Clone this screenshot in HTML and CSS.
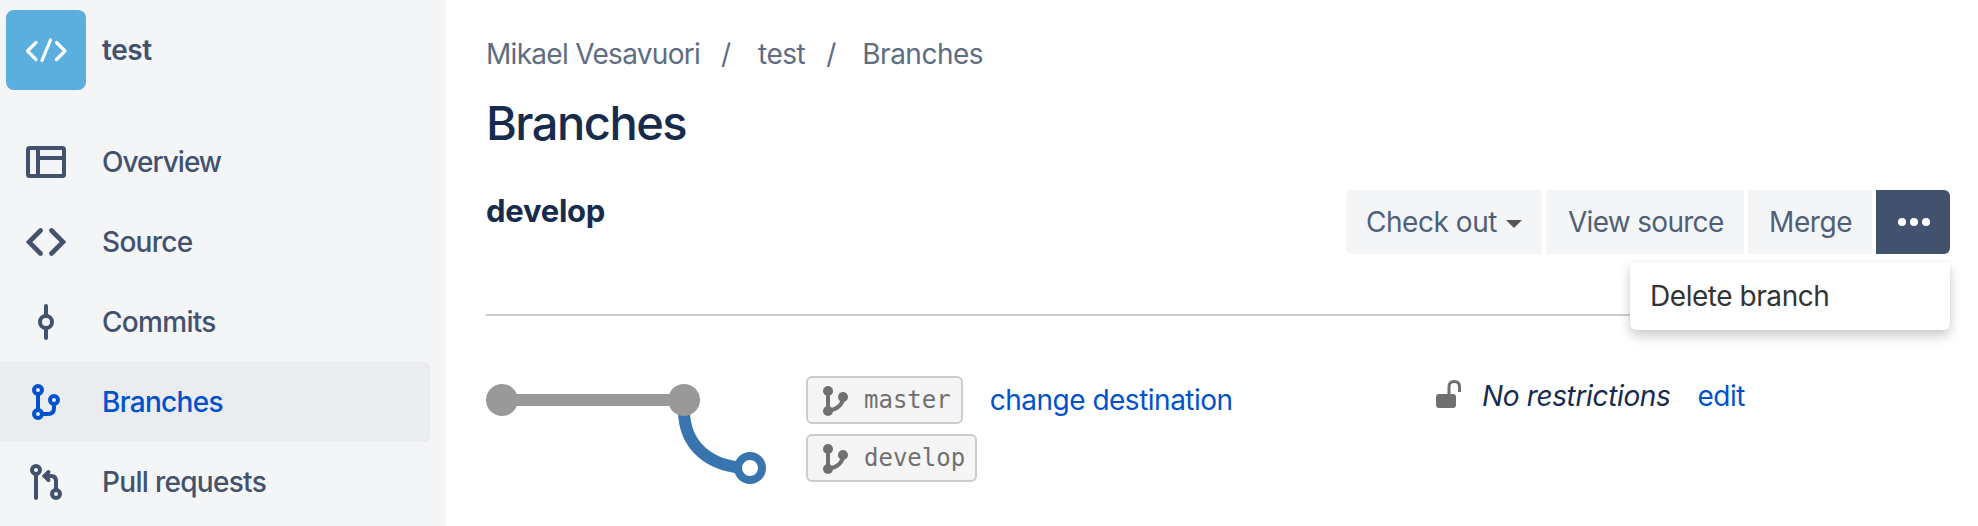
FILE: index.html
```
<!DOCTYPE html>
<html lang="en">
<head>
<meta charset="utf-8">
<title>Branches</title>
<link rel="stylesheet" href="styles.css">
</head>
<body>
<div class="app">
  <aside class="sidebar">
    <div class="repo">
      <span class="repo-tile">
        <svg width="80" height="80" viewBox="0 0 80 80" fill="none" stroke="#fff" stroke-width="3.2" stroke-linecap="round" stroke-linejoin="round"><path d="M30 32.500 21.500 41l8.500 8.500M36 50.500 44.500 30M50.500 32.500 59 41l-8.500 8.500"/></svg>
      </span>
      <span class="repo-name">test</span>
    </div>
    <nav class="nav">
      <a class="nav-item">
        <svg class="nav-icon" viewBox="0 0 48 48" fill="none" stroke="currentColor" stroke-width="4"><rect x="6" y="10" width="36" height="28" rx="1.5"/><path d="M16 10v28M16 20h26"/></svg>
        <span class="label-overview">Overview</span>
      </a>
      <a class="nav-item">
        <svg class="nav-icon" viewBox="0 0 48 48" fill="none" stroke="currentColor" stroke-width="4.600" stroke-linecap="round"><path d="M18.500 12.500 7 24l11.500 11.500M29.500 12.500 41 24 29.500 35.500"/></svg>
        <span>Source</span>
      </a>
      <a class="nav-item">
        <svg class="nav-icon" viewBox="0 0 48 48" fill="none" stroke="currentColor" stroke-width="4" stroke-linecap="round"><path d="M24 8v8M24 32v8"/><circle cx="24" cy="24" r="6"/></svg>
        <span>Commits</span>
      </a>
      <a class="nav-item nav-item-active">
        <svg class="nav-icon" viewBox="0 0 48 48" fill="none" stroke="currentColor" stroke-width="4"><circle cx="16" cy="12" r="4"/><circle cx="16" cy="36" r="4"/><circle cx="32" cy="22" r="4"/><path d="M16 16v16M20 36h6q6 0 6-6v-4"/></svg>
        <span>Branches</span>
      </a>
      <a class="nav-item">
        <svg class="nav-icon" viewBox="0 0 48 48" fill="none" stroke="currentColor" stroke-width="4" stroke-linecap="round"><circle cx="14" cy="12" r="4"/><circle cx="34" cy="36" r="4"/><path d="M14 16v24M34 32v-9q0-5-5-5h-5M26.500 14 22.500 18l4 4"/></svg>
        <span>Pull requests</span>
      </a>
    </nav>
  </aside>

  <main class="main">
    <div class="crumbs">
      <span class="crumb-owner">Mikael Vesavuori</span><span class="slash">/</span>
      <span class="crumb-repo">test</span><span class="slash">/</span>
      <span class="crumb-page">Branches</span>
    </div>
    <h1 class="title">Branches</h1>

    <header class="branch-head">
      <h2 class="branch-name">develop</h2>
      <div class="actions">
        <button class="btn btn-checkout">Check out<i class="caret"></i></button>
        <button class="btn btn-view">View source</button>
        <button class="btn btn-merge">Merge</button>
        <button class="btn btn-more" aria-label="More">
          <svg width="32" height="8" viewBox="0 0 32 8" fill="#fff"><circle cx="4" cy="4" r="4"/><circle cx="16" cy="4" r="4"/><circle cx="28" cy="4" r="4"/></svg>
        </button>
        <div class="menu">Delete branch</div>
      </div>
    </header>

    <section class="detail">
      <svg class="graph" width="280" height="108" viewBox="0 0 280 108" fill="none" stroke-width="12">
        <path d="M198 34C198 70 224 92 264 92" stroke="#3874ae"/>
        <path d="M16 24h182" stroke="#999"/>
        <circle cx="16" cy="24" r="16" fill="#999" stroke="none"/>
        <circle cx="198" cy="24" r="16" fill="#999" stroke="none"/>
        <circle cx="264" cy="92" r="12" fill="#fff" stroke="#3874ae" stroke-width="8"/>
      </svg>
      <div class="refs">
        <div class="ref-row">
          <span class="ref"><svg class="ref-icon" viewBox="0 0 26 30" fill="#707070"><circle cx="5" cy="5" r="5"/><circle cx="5" cy="25" r="5"/><circle cx="20" cy="11" r="5"/><path d="M5 5v20q15-3 15-14" fill="none" stroke="#707070" stroke-width="4"/></svg>master</span>
          <a class="link change">change destination</a>
        </div>
        <div class="ref-row">
          <span class="ref"><svg class="ref-icon" viewBox="0 0 26 30" fill="#707070"><circle cx="5" cy="5" r="5"/><circle cx="5" cy="25" r="5"/><circle cx="20" cy="11" r="5"/><path d="M5 5v20q15-3 15-14" fill="none" stroke="#707070" stroke-width="4"/></svg>develop</span>
        </div>
      </div>
      <div class="restrict">
        <svg class="lock" width="25" height="28" viewBox="0 0 25 28"><rect y="14" width="20" height="14" rx="3" fill="#707070"/><path d="M13 15V7q0-5.500 5.300-5.500T23.500 7v5" fill="none" stroke="#707070" stroke-width="3"/></svg>
        <em class="restrict-text">No restrictions</em>
        <a class="link edit">edit</a>
      </div>
    </section>
  </main>
</div>
</body>
</html>
```
FILE: styles.css
```
* { box-sizing: border-box; }
body {
  margin: 0;
  background: #fff;
  color: #172b4d;
  font-family: Inter, "Liberation Sans", sans-serif;
  font-size: 28px;
  line-height: 36px;
  letter-spacing: -0.5px;
  white-space: nowrap;
}
.app { display: flex; height: 526px; overflow: hidden; }

/* Sidebar */
.sidebar { flex: none; width: 446px; background: #f4f5f7; color: #42526e; }
.repo { display: flex; align-items: center; gap: 16px; padding: 10px 0 0 6px; }
.repo-tile { width: 80px; height: 80px; border-radius: 8px; background: #5bafde; }
.repo-tile svg { display: block; }
.repo-name { font-weight: 600; letter-spacing: -0.4px; }
.nav { padding: 32px 16px 0 0; }
.nav-item {
  display: flex;
  align-items: center;
  gap: 32px;
  height: 80px;
  padding-left: 22px;
  border-radius: 0 6px 6px 0;
  font-weight: 450;
  letter-spacing: -0.7px;
}
.nav-item-active { background: #ebecf0; color: #0052cc; }
.nav-icon { width: 48px; height: 48px; }
.nav-item .label-overview { letter-spacing: -1px; }

/* Page heading */
.main { flex: 1; min-width: 0; padding: 36px 28px 0 40px; }
.crumbs { display: flex; color: #5e6c84; }
.crumb-owner { letter-spacing: -0.7px; }
.slash { width: 58px; padding-left: 21px; }
.crumb-repo + .slash { width: 57px; }
.title {
  margin: 23px 0 0;
  font-size: 47px;
  line-height: 56px;
  font-weight: 550;
  letter-spacing: -1.5px;
}

/* Branch header */
.branch-head {
  display: flex;
  justify-content: space-between;
  height: 165px;
  padding-top: 39px;
  border-bottom: 2px solid #ccc;
}
.branch-name {
  margin: 3px 0 0;
  font-size: 31px;
  line-height: 36px;
  font-weight: 650;
  letter-spacing: -0.25px;
}
.actions { position: relative; display: flex; gap: 4px; height: 64px; }
.btn {
  display: flex;
  align-items: center;
  border: 0;
  padding: 0 0 0 20px;
  background: #f4f5f7;
  color: #505f79;
  font: inherit;
  letter-spacing: -0.45px;
}
.btn-checkout { width: 196px; border-radius: 6px 0 0 6px; }
.btn-view { width: 198px; padding-left: 22px; letter-spacing: -0.7px; }
.btn-merge { width: 124px; padding-left: 21px; letter-spacing: -0.4px; }
.btn-more { width: 74px; padding: 0 0 0 22px; background: #42526e; border-radius: 0 6px 6px 0; }
.caret {
  margin: 4px 0 0 9px;
  border: 8px solid transparent;
  border-top-color: #555;
  border-bottom: 0;
}
.menu {
  position: absolute;
  top: 72px;
  right: 0;
  width: 320px;
  height: 68px;
  padding: 16px 20px;
  background: #fff;
  border-radius: 0 0 6px 6px;
  box-shadow: 0 6px 12px rgba(0, 0, 0, 0.2), 0 0 2px rgba(0, 0, 0, 0.08);
  color: #333;
  letter-spacing: -0.45px;
}

/* Branch relationship */
.detail { display: flex; align-items: flex-start; padding-top: 60px; }
.graph { flex: none; margin: 0 40px 0 0; }
.refs { display: flex; flex-direction: column; gap: 10px; width: 630px; }
.ref-row { display: flex; align-items: center; gap: 27px; height: 48px; }
.ref {
  display: flex;
  align-items: center;
  gap: 15px;
  height: 48px;
  padding: 0 10px 0 15px;
  border: 2px solid #ccc;
  border-radius: 6px;
  background: #f5f5f5;
  color: #707070;
  font: 24px "DejaVu Sans Mono", monospace;
  letter-spacing: 0;
}
.ref-icon { width: 26px; height: 30px; margin-top: 2px; }
.link { color: #0052cc; }
.restrict { display: flex; align-items: center; padding-top: 2px; }
.lock { margin: -4px 21px 0 0; }
.restrict-text { letter-spacing: -0.36px; }
.edit { margin-left: 27px; }
```
